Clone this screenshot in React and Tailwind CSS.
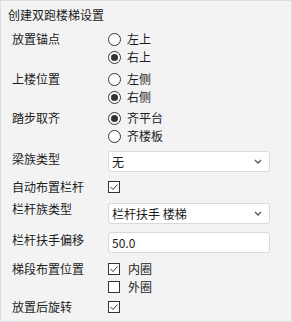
const font = { fontFamily: '"Noto Sans CJK SC", "Noto Sans", sans-serif' };

const Radio = ({ checked, label }) => (
  <div className="flex items-center h-[18px]">
    <span className="w-[13px] h-[13px] rounded-full border border-[#333] bg-white flex items-center justify-center">
      {checked && <span className="w-[7px] h-[7px] rounded-full bg-[#333]" />}
    </span>
    <span className="ml-[6px] text-[12px] leading-[18px]">{label}</span>
  </div>
);

const Check = ({ checked, label }) => (
  <div className="flex items-center h-[18px]">
    <span className="w-[12px] h-[12px] border border-[#333] bg-white flex items-center justify-center">
      {checked && (
        <svg width="10" height="10" viewBox="0 0 10 10">
          <polyline points="1.5,5 4,7.5 8.5,2.5" fill="none" stroke="#333" strokeWidth="1" />
        </svg>
      )}
    </span>
    {label && <span className="ml-[8px] text-[12px] leading-[18px]">{label}</span>}
  </div>
);

const Select = ({ value }) => (
  <div className="w-[162px] h-[21px] bg-white border border-[#d5dae0] rounded-[3px] flex items-center justify-between pl-[3px] pr-[7px]">
    <span className="text-[12px] leading-[19px]">{value}</span>
    <svg width="8" height="5" viewBox="0 0 8 5">
      <path d="M1 1l3 3 3-3" fill="none" stroke="#555" strokeWidth="1.3" />
    </svg>
  </div>
);

const Row = ({ label, labelClass = 'leading-[18px]', className = '', children }) => (
  <div className={`flex items-start ${className}`}>
    <div className={`w-[107px] pl-[11px] text-[12px] ${labelClass}`}>{label}</div>
    <div className="flex flex-col">{children}</div>
  </div>
);

export default function App() {
  return (
    <div
      className="w-[292px] h-[322px] bg-[#f3f3f3] border border-[#dadde2] text-[#1c1c1c] flex flex-col"
      style={font}
    >
      <div className="h-[27px] pl-[7px] text-[12px] leading-[27px]">创建双跑楼梯设置</div>

      <Row label="放置锚点" className="mt-[2px]">
        <Radio label="左上" />
        <Radio checked label="右上" />
      </Row>
      <Row label="上楼位置" className="mt-[4px]">
        <Radio label="左侧" />
        <Radio checked label="右侧" />
      </Row>
      <Row label="踏步取齐" className="mt-[3px]">
        <Radio checked label="齐平台" />
        <Radio label="齐楼板" />
      </Row>
      <Row label="梁族类型" labelClass="leading-[15px]" className="mt-[6px]">
        <Select value="无" />
      </Row>
      <Row label="自动布置栏杆" className="mt-[6px]">
        <Check checked />
      </Row>
      <Row label="栏杆族类型" labelClass="leading-[12px]" className="mt-[7px]">
        <Select value="栏杆扶手 楼梯" />
      </Row>
      <Row label="栏杆扶手偏移" labelClass="leading-[16px]" className="mt-[8px]">
        <div className="w-[162px] h-[21px] bg-white border border-[#d5dae0] rounded-[3px] flex items-center pl-[3px]">
          <span className="text-[12px] leading-[19px]">50.0</span>
        </div>
      </Row>
      <Row label="梯段布置位置" className="mt-[7px]">
        <Check checked label="内圈" />
        <Check label="外圈" />
      </Row>
      <Row label="放置后旋转" className="mt-[2px]">
        <Check checked />
      </Row>
    </div>
  );
}
